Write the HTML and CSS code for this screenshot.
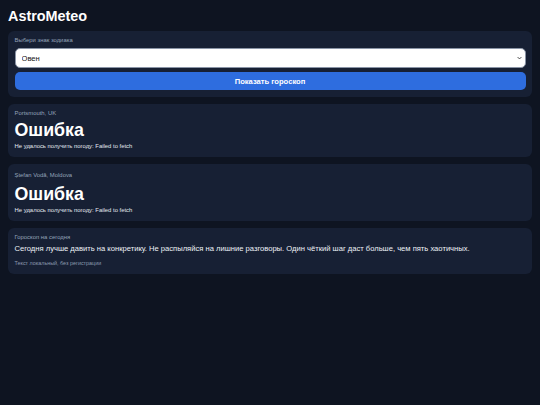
FILE: index.html
```html
<!DOCTYPE html>
<html lang="ru">
<head>
<meta charset="utf-8">
<title>AstroMeteo</title>
<link rel="stylesheet" href="styles.css">
</head>
<body>
<h1 class="title">AstroMeteo</h1>
<main class="stack">
  <section class="card form">
    <label class="label" for="sign">Выбери знак зодиака</label>
    <div class="select-wrap">
      <select id="sign" class="select">
        <option>Овен</option>
      </select>
      <svg class="chev" viewBox="0 0 8 6" width="5" height="4"><path d="M1 1.5 L4 4.5 L7 1.5" fill="none" stroke="#333" stroke-width="1.4"/></svg>
    </div>
    <button class="btn" type="button">Показать гороскоп</button>
  </section>
  <section class="card">
    <div class="label">Portsmouth, UK</div>
    <div class="big">Ошибка</div>
    <div class="note">Не удалось получить погоду: Failed to fetch</div>
  </section>
  <section class="card">
    <div class="label label-tall">Ștefan Vodă, Moldova</div>
    <div class="big">Ошибка</div>
    <div class="note">Не удалось получить погоду: Failed to fetch</div>
  </section>
  <section class="card">
    <div class="label">Гороскоп на сегодня</div>
    <div class="text">Сегодня лучше давить на конкретику. Не распыляйся на лишние разговоры. Один чёткий шаг даст больше, чем пять хаотичных.</div>
    <div class="foot">Текст локальный, без регистрации</div>
  </section>
</main>
</body>
</html>
```
FILE: styles.css
```css
html, body {
  margin: 0;
  background: #0e1421;
}
body {
  padding: 8px;
  font-family: "Liberation Sans", Arial, sans-serif;
  color: #e8edf5;
}
.title {
  margin: 0 0 7px 0;
  font-size: 14.4px;
  line-height: 16px;
  font-weight: 700;
  color: #ffffff;
}
.stack {
  display: flex;
  flex-direction: column;
  gap: 7px;
}
.card {
  background: #172034;
  border-radius: 6px;
  padding: 6px 6.5px 7px;
  display: flex;
  flex-direction: column;
}
.form .label {
  margin-bottom: 4px;
}
.label {
  font-size: 5.9px;
  line-height: 7px;
  color: #94a3b8;
}
.label-tall {
  line-height: 11px;
}
.select-wrap {
  position: relative;
}
.select {
  display: block;
  width: 100%;
  height: 20px;
  margin: 0;
  padding: 0 6px;
  border: 1px solid #8a94a6;
  border-radius: 5px;
  background: #ffffff;
  color: #111;
  font-family: "Liberation Sans", Arial, sans-serif;
  font-size: 7.6px;
  appearance: none;
  -webkit-appearance: none;
}
.chev {
  position: absolute;
  right: 4px;
  top: 8px;
}
.btn {
  margin-top: 4px;
  height: 18px;
  border: 0;
  border-radius: 5px;
  background: #2e6ddf;
  color: #ffffff;
  font-family: "Liberation Sans", Arial, sans-serif;
  font-size: 7.6px;
  font-weight: 700;
}
.big {
  margin-top: 3px;
  font-size: 17.8px;
  line-height: 20px;
  font-weight: 700;
  color: #ffffff;
}
.note {
  margin-top: 3px;
  font-size: 5.9px;
  line-height: 7px;
  color: #e2e8f0;
}
.text {
  margin-top: 3px;
  font-size: 7.6px;
  line-height: 10px;
  color: #eef2f7;
}
.foot {
  margin-top: 5px;
  font-size: 5.4px;
  line-height: 8px;
  color: #8c9ab0;
}
```
